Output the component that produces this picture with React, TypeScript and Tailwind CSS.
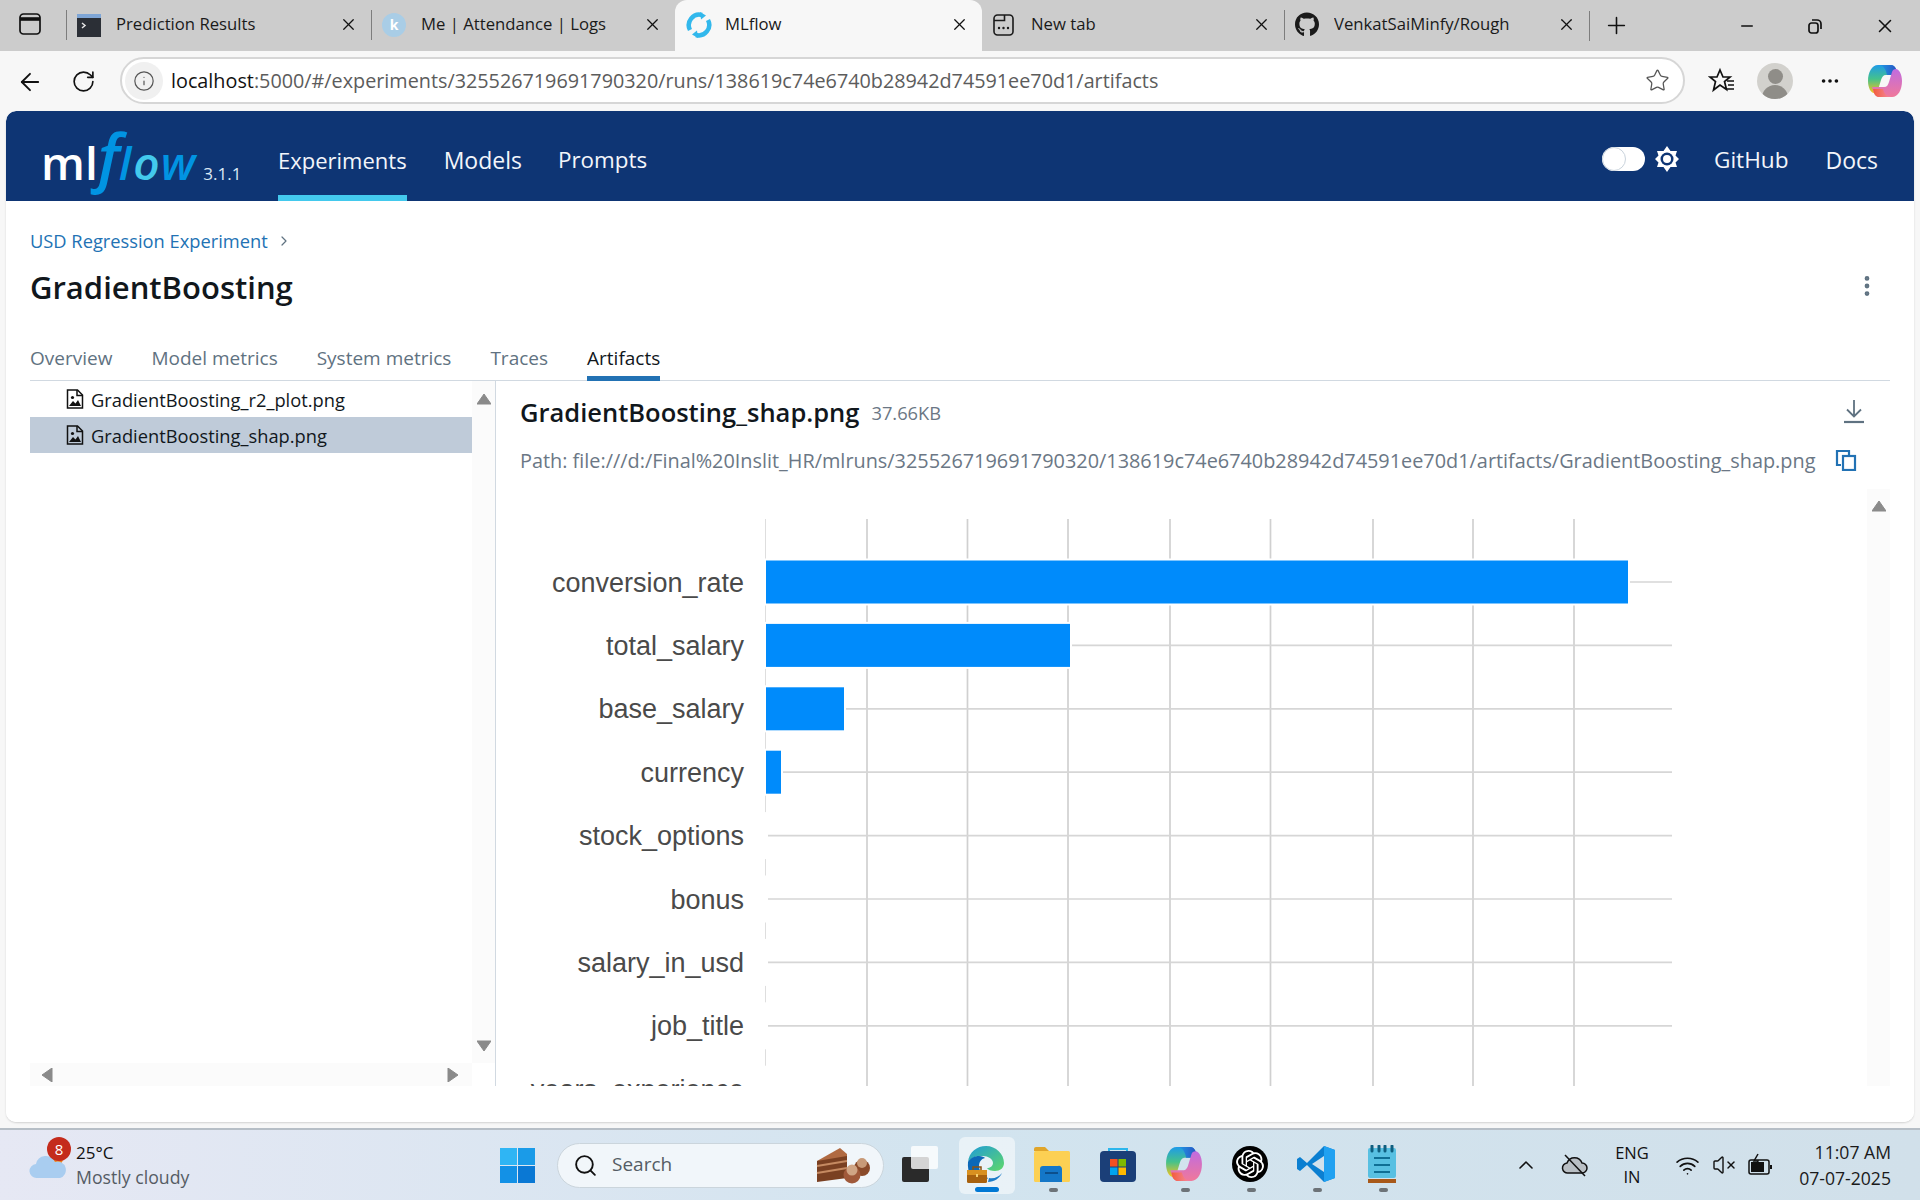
import React from 'react';
import { ArrowLeft, RotateCw, Info, Star, Plus, Minus, X, Search, ChevronUp, Wifi, VolumeX, MoreVertical, MoreHorizontal, ChevronRight } from 'lucide-react';
import { FaGithub } from 'react-icons/fa';
import { SiOpenai } from 'react-icons/si';

const UI_FONT = "font-['Open_Sans','Noto_Sans',sans-serif]";

const chartRows = [
    { label: 'conversion_rate', end: 1628 },
    { label: 'total_salary', end: 1070 },
    { label: 'base_salary', end: 844 },
    { label: 'currency', end: 781 },
    { label: 'stock_options', end: 766 },
    { label: 'bonus', end: 766 },
    { label: 'salary_in_usd', end: 766 },
    { label: 'job_title', end: 766 },
    { label: 'years_experience', end: 766 },
];

const gridX = [765.5, 867, 967.5, 1068, 1170, 1270.5, 1373, 1473, 1574];

const TerminalFavicon = () => (
    <svg width="24" height="24" viewBox="0 0 24 24">
        <rect x="0" y="1" width="24" height="23" fill="#2b2f36" />
        <rect x="0" y="1" width="24" height="4" fill="#7fa6d6" />
        <path d="M5 10l3 2.5L5 15" stroke="#e5e5e5" strokeWidth="1.5" fill="none" />
    </svg>
);

const KFavicon = () => (
    <div className="w-6 h-6 rounded-full bg-[#a9cde6] flex items-center justify-center text-white font-bold text-[14px]">k</div>
);

const MlflowFavicon = () => (
    <svg width="26" height="26" viewBox="0 0 26 26" fill="none" strokeWidth="4.5" strokeLinecap="butt">
        <path d="M4 18A10.5 10.5 0 0 1 16 3" stroke="#32b8ec" />
        <path d="M22 8A10.5 10.5 0 0 1 10 23" stroke="#32b8ec" />
        <path d="M14 0l6 3.5-5 4z" fill="#32b8ec" />
        <path d="M12 26l-6-3.5 5-4z" fill="#32b8ec" />
    </svg>
);

const NewTabFavicon = () => (
    <svg width="24" height="24" viewBox="0 0 24 24" fill="none" stroke="#1a1a1a" strokeWidth="1.6">
        <rect x="2" y="2" width="19" height="20" rx="3.5" />
        <path d="M2 7.5h10.5V2" />
        <path d="M7 15h.01M11.5 15h.01M16 15h.01" strokeWidth="2.4" strokeLinecap="round" />
    </svg>
);

const Tab: React.FC<{ width: string; icon: React.ReactNode; title: string; active?: boolean; divider?: boolean }> = ({ width, icon, title, active, divider }) => (
    <div className={`${width} h-[51px] pb-[2px] flex items-center relative ${active ? 'bg-[#f7f7f7] rounded-t-[12px]' : ''}`}>
        {divider && <div className="w-px h-[30px] bg-[#7d7d7d]" />}
        <div className={`${active ? 'ml-[11px] w-[26px] mr-[13px]' : 'ml-[10px] w-6 mr-[15px]'} flex items-center justify-center shrink-0`}>{icon}</div>
        <span className="flex-1 text-[16.7px] mb-[2px] text-[#1a1a1a] whitespace-nowrap overflow-hidden">{title}</span>
        <X size={19} strokeWidth={1.6} className="mr-[13px] text-[#111]" />
    </div>
);

const TabStrip = () => (
    <div className="h-[51px] bg-[#cccccc] flex items-center shrink-0">
        <div className="w-[66px] pr-[6px] pb-[4px] flex items-center justify-center">
            <svg width="22" height="24" viewBox="0 0 22 24" fill="none" stroke="#111" strokeWidth="1.7">
                <rect x="1" y="2" width="20" height="20" rx="3.5" />
                <path d="M1 7h20" strokeWidth="3.6" />
            </svg>
        </div>
        <Tab width="w-[305px]" divider icon={<TerminalFavicon />} title="Prediction Results" />
        <Tab width="w-[304px]" divider icon={<KFavicon />} title="Me | Attendance | Logs" />
        <Tab width="w-[307px]" active icon={<MlflowFavicon />} title="MLflow" />
        <Tab width="w-[302px]" icon={<NewTabFavicon />} title="New tab" />
        <Tab width="w-[305px]" divider icon={<FaGithub size={25} className="text-[#1a1a1a]" />} title="VenkatSaiMinfy/Rough" />
        <div className="w-px h-[30px] bg-[#7d7d7d]" />
        <Plus size={27} strokeWidth={1.4} className="ml-[13px] text-[#111]" />
        <div className="ml-auto flex items-center">
            <Minus size={18} strokeWidth={2} className="mr-[50px] text-[#111]" />
            <svg width="18" height="18" viewBox="0 0 18 18" fill="none" stroke="#111" strokeWidth="1.7" className="mr-[50px]">
                <rect x="3" y="6" width="9" height="10" rx="2.5" />
                <path d="M6 3h5a4 4 0 0 1 4 4v5" />
            </svg>
            <X size={22} strokeWidth={1.7} className="mr-[24px] text-[#111]" />
        </div>
    </div>
);

const CopilotIcon: React.FC<{ size: number; id: string }> = ({ size, id }) => (
    <svg width={size} height={size} viewBox="0 0 36 36">
        <defs>
            <linearGradient id={`${id}A`} x1="0" y1="0" x2="0" y2="1">
                <stop offset="0" stopColor="#1f9be8" />
                <stop offset="0.5" stopColor="#45c28b" />
                <stop offset="1" stopColor="#f6c21c" />
            </linearGradient>
            <linearGradient id={`${id}B`} x1="0" y1="0" x2="0" y2="1">
                <stop offset="0" stopColor="#c06ce0" />
                <stop offset="1" stopColor="#f0789a" />
            </linearGradient>
            <linearGradient id={`${id}C`} x1="0" y1="0" x2="1" y2="0">
                <stop offset="0" stopColor="#1fa0e8" />
                <stop offset="1" stopColor="#2a4fc0" />
            </linearGradient>
            <linearGradient id={`${id}D`} x1="0" y1="0" x2="1" y2="0">
                <stop offset="0" stopColor="#f25c3b" />
                <stop offset="1" stopColor="#f58ca8" />
            </linearGradient>
        </defs>
        <path d="M11 2h13c2 0 4 1.500 5 4l2 6H19c-3 0-4 2-5 5l-3 10c-.6 2-2 3-4 3-3 0-6-5-6-12C1 9 5 2 11 2z" fill={`url(#${id}A)`} />
        <path d="M11 2h13c2 0 4 1.500 5 4l2 6H20c-1-5-3-10-9-10z" fill={`url(#${id}C)`} />
        <path d="M25 34H12c-2 0-4-1.500-5-4l-2-6h12c3 0 4-2 5-5l3-10c.6-2 2-3 4-3 3 0 6 5 6 12 0 9-4 16-10 16z" fill={`url(#${id}B)`} />
        <path d="M25 34H12c-2 0-4-1.500-5-4l-1-4h10c1 4 3 8 9 8z" fill={`url(#${id}D)`} />
    </svg>
);

const Toolbar = () => (
    <div className="h-[60px] bg-[#f7f7f7] flex items-center shrink-0">
        <ArrowLeft size={28} strokeWidth={1.6} className="ml-[16px] mt-[1px] text-[#111]" />
        <RotateCw size={25} strokeWidth={1.6} className="ml-[27px] mt-[1px] text-[#111]" />
        <div className="ml-[24px] w-[1565px] h-[47px] mt-[-1px] bg-white rounded-full border-2 border-[#d6d6d6] flex items-center">
            <div className="ml-[3px] w-[38px] h-[38px] rounded-full bg-[#f0f0f0] flex items-center justify-center">
                <Info size={22} strokeWidth={1.3} className="text-[#555]" />
            </div>
            <span className="ml-[8px] mt-[1px] text-[19.8px] text-[#5c5c5c] whitespace-nowrap">
                <span className="text-[#111]">localhost</span>:5000/#/experiments/325526719691790320/runs/138619c74e6740b28942d74591ee70d1/artifacts
            </span>
            <Star size={25} strokeWidth={1.2} className="ml-auto mr-[13px] text-[#555]" />
        </div>
        <svg width="28" height="28" viewBox="0 0 28 28" fill="none" stroke="#111" strokeWidth="1.7" className="ml-[23px]">
            <path d="M12 3l3 7h7l-5.500 4.500 2 8L12 18l-6.500 5 2-8.500L2 10h7z" />
            <path d="M19 14h7M20 18h6M19 22h7" />
        </svg>
        <div className="ml-[21px] w-[36px] h-[36px] rounded-full bg-[#d2d1cd] overflow-hidden flex flex-col items-center">
            <div className="w-[15px] h-[17px] mt-[6px] rounded-full bg-[#8f8d88]" />
            <div className="w-[26px] h-[16px] mt-[1px] rounded-t-full bg-[#8f8d88]" />
        </div>
        <MoreHorizontal size={22} strokeWidth={2} className="ml-[26px] text-[#111]" />
        <div className="ml-[26px]"><CopilotIcon size={36} id="cpTop" /></div>
    </div>
);

const ThemeIcon = () => (
    <svg width="24" height="26" viewBox="0 0 24 26">
        <path d="M12 0l3.500 5H22l-1.500 4.500L24 13l-3.500 3.500L22 21h-6.500L12 26l-3.500-5H2l1.500-4.500L0 13l3.500-3.500L2 5h6.500z" fill="#fff" />
        <circle cx="12" cy="13" r="6.500" fill="#0e3574" />
        <circle cx="12" cy="13" r="4" fill="#fff" />
    </svg>
);

const MlflowLogo = () => (
    <div className="w-[272px] shrink-0 pl-[35px] flex items-baseline text-[46px] leading-none font-semibold">
        <span className="text-white">ml</span>
        <span className="text-[#0194e2] italic text-[64px] mr-[-1px]">f</span>
        <span className="text-[#0194e2] italic">l</span>
        <span className="text-[#43c9ed] italic ml-[2px]">o</span>
        <span className="text-[#0194e2] italic ml-[1px]">w</span>
        <span className="text-[#dbe9f5] text-[17px] font-normal ml-[8px]">3.1.1</span>
    </div>
);

const NavLink: React.FC<{ label: string; active?: boolean; className?: string }> = ({ label, active, className }) => (
    <div className={`h-full flex items-center relative pt-[8px] text-[#f3f6fb] ${className ?? ''}`}>
        <span>{label}</span>
        {active && <div className="absolute left-0 right-0 bottom-0 h-[6px] bg-[#43c9ed]" />}
    </div>
);

const Header = () => (
    <div className="h-[90px] bg-[#0e3574] rounded-t-[10px] flex items-center shrink-0">
        <MlflowLogo />
        <NavLink label="Experiments" active className="text-[22px]" />
        <NavLink label="Models" className="ml-[37px] text-[23px]" />
        <NavLink label="Prompts" className="ml-[36px] text-[22.4px]" />
        <div className="ml-auto flex items-center h-full">
            <div className="w-[43px] h-[24px] mt-[6px] bg-white rounded-full relative mr-[10px]">
                <div className="w-[24px] h-[24px] rounded-full border border-[#c9d3dc] bg-white" />
            </div>
            <div className="mt-[6px]"><ThemeIcon /></div>
            <NavLink label="GitHub" className="ml-[35px] text-[22.6px]" />
            <NavLink label="Docs" className="ml-[37px] mr-[36px] text-[23px]" />
        </div>
    </div>
);

const FileImageIcon = () => (
    <svg width="18" height="20" viewBox="0 0 18 20" fill="none" stroke="#111" strokeWidth="1.5">
        <path d="M1.500 1h10l5 5v13h-15z" />
        <path d="M11 1v5.500h5.500" />
        <circle cx="6.500" cy="8.500" r="1.600" fill="#111" stroke="none" />
        <path d="M3 17l4-5 2.500 2.500L12 11l3 6z" fill="#111" stroke="none" />
    </svg>
);

const ArrowBtn: React.FC<{ dir: 'up' | 'down' | 'left' | 'right' }> = ({ dir }) => {
    const d = {
        up: 'M7 1L14 11H0z',
        down: 'M7 11L0 1h14z',
        left: 'M1 7L11 0v14z',
        right: 'M11 7L1 0v14z',
    }[dir];
    return (
        <svg width="14" height="14" viewBox="0 0 14 14" className="shrink-0">
            <path d={d} fill="#8a8a8a" stroke="#8a8a8a" strokeLinejoin="round" />
        </svg>
    );
};

const TreeRow: React.FC<{ name: string; selected?: boolean }> = ({ name, selected }) => (
    <div className={`h-[36px] flex items-center pl-[36px] ${selected ? 'bg-[#bfcbd9]' : ''}`}>
        <FileImageIcon />
        <span className="ml-[7px] mt-[1px] text-[18.3px] text-[#11171c]">{name}</span>
    </div>
);

const FileTree = () => (
    <div className="w-[466px] ml-[24px] shrink-0 border-r border-[#d1d9e1] flex flex-col">
        <div className="flex-1 flex min-h-0">
            <div className="flex-1">
                <TreeRow name="GradientBoosting_r2_plot.png" />
                <TreeRow name="GradientBoosting_shap.png" selected />
            </div>
            <div className="w-[23px] bg-[#fbfbfb] flex flex-col items-center justify-between pt-[12px] pb-[9px]">
                <ArrowBtn dir="up" />
                <ArrowBtn dir="down" />
            </div>
        </div>
        <div className="h-[23px] w-[442px] bg-[#fbfbfb] flex items-center justify-between px-[11px]">
            <ArrowBtn dir="left" />
            <ArrowBtn dir="right" />
        </div>
    </div>
);

const ShapChart = () => (
    <svg viewBox="496 489 1371 597" width="1371" height="597" className="block">
        {gridX.map((x, i) => (
            <line key={x} x1={x} x2={x} y1={519} y2={1086} stroke={i === 0 ? '#dedede' : '#d0d0d0'} strokeWidth={i === 0 ? 1 : 1.7} />
        ))}
        {chartRows.map((row, i) => {
            const y = 582 + 63.4 * i;
            return (
                <g key={row.label}>
                    <line x1={766} x2={1672} y1={y} y2={y} stroke="#d6d6d6" strokeWidth={1.7} />
                    <rect x={764} y={y - 23.5} width={row.end - 764 + 2} height={47} fill="#fff" />
                    {row.end > 766 && <rect x={766} y={y - 21.5} width={row.end - 766} height={43} fill="#008bfb" />}
                    <text x={744} y={y + 9.500} textAnchor="end" fontSize={27} fill="#4a4a4a" fontFamily="'Liberation Sans', Arial, sans-serif">
                        {row.label}
                    </text>
                </g>
            );
        })}
    </svg>
);

const ArtifactView = () => (
    <div className="flex-1 min-w-0 flex flex-col">
        <div className="h-[59px] pl-[24px] flex items-center">
            <span className="text-[25.5px] font-semibold text-[#11171c] mt-[4px]">GradientBoosting_shap.png</span>
            <span className="ml-[12px] text-[18.3px] text-[#6b7785] mt-[4px]">37.66KB</span>
            <svg width="24" height="26" viewBox="0 0 24 26" fill="none" stroke="#5f7281" strokeWidth="1.8" className="ml-auto mr-[24px]">
                <path d="M12 2v16M5 11.500l7 7 7-7" />
                <path d="M2 24h20" strokeWidth="2.2" />
            </svg>
        </div>
        <div className="h-[49px] pb-[7px] pl-[24px] flex items-center">
            <span className="text-[19.88px] text-[#6b7785] whitespace-nowrap">
                Path: file:///d:/Final%20Inslit_HR/mlruns/325526719691790320/138619c74e6740b28942d74591ee70d1/artifacts/GradientBoosting_shap.png
            </span>
            <svg width="22" height="22" viewBox="0 0 22 22" fill="none" stroke="#2272b4" strokeWidth="2.2" className="ml-[20px] mb-[2px]">
                <path d="M6 16H2V2h12v4" />
                <rect x="8" y="7" width="12" height="14" />
            </svg>
        </div>
        <div className="flex-1 min-h-0 flex">
            <div className="flex-1 min-w-0 overflow-hidden">
                <ShapChart />
            </div>
            <div className="w-[23px] bg-[#fbfbfb] flex justify-center pt-[11px]">
                <ArrowBtn dir="up" />
            </div>
        </div>
    </div>
);

const RunPage = () => (
    <div className="flex-1 min-h-0 flex flex-col bg-white">
        <div className="h-[180px] shrink-0 pl-[24px] pr-[24px] relative">
            <div className="h-[66px] pt-[13px] flex items-center text-[18.3px] text-[#2272b4]">
                USD Regression Experiment
                <ChevronRight size={16} strokeWidth={1.8} className="ml-[8px] text-[#5f7281]" />
            </div>
            <div className="flex items-center justify-between h-[44px]">
                <h1 className="text-[31px] font-semibold text-[#11171c] mb-[4px]">GradientBoosting</h1>
                <MoreVertical size={26} strokeWidth={2.4} className="text-[#5f7281] mt-[-7px] mr-[10px]" />
            </div>
            <div className="mt-[21px] h-[49px] flex items-end gap-[39px] border-b border-[#d1d9e1] text-[19px] text-[#5f7281]">
                {['Overview', 'Model metrics', 'System metrics', 'Traces'].map((t) => (
                    <div key={t} className="h-[49px] pt-[5px] flex items-center">{t}</div>
                ))}
                <div className="h-[49px] flex items-center border-b-[5px] border-[#2272b4] mb-[-1px] pt-[8px] text-[#11171c] font-medium">Artifacts</div>
            </div>
        </div>
        <div className="flex-1 min-h-0 flex pr-[24px]">
            <FileTree />
            <ArtifactView />
        </div>
        <div className="h-[36px] shrink-0" />
    </div>
);

const EdgeIcon = () => (
    <svg width="38" height="38" viewBox="0 0 38 38">
        <defs>
            <linearGradient id="edgeG" x1="0" y1="0" x2="1" y2="1">
                <stop offset="0" stopColor="#1e9bd8" />
                <stop offset="1" stopColor="#5fd86a" />
            </linearGradient>
        </defs>
        <path d="M1 17C2 7 10 1 19 1c10 0 18 8 18 17 0 5-4 8-9 8-4 0-7-1-8-3 3 0 6-2 6-5 0-4-5-7-10-7C9 11 3 13 1 17z" fill="url(#edgeG)" />
        <path d="M1 17c2-4 7-6 11-6 3 0 5 1 6 2-4 1-6 4-6 8 0 5 4 10 9 12-1 2-8 4-10 4C5 37 0 27 1 17z" fill="#0c68b8" />
        <path d="M22 33c5 1 10-1 13-5-2 5-8 9-14 9z" fill="#1c7cc8" />
        <rect x="0" y="25" width="20" height="13" rx="1.500" fill="#a8620f" />
        <rect x="0" y="25" width="20" height="5" fill="#d89020" />
        <path d="M6 25v-3h8v3" fill="none" stroke="#8a5210" strokeWidth="1.500" />
        <rect x="9" y="29" width="2" height="3" fill="#f6d070" />
    </svg>
);

const FolderIcon = () => (
    <svg width="36" height="36" viewBox="0 0 36 36">
        <path d="M0 3a2 2 0 0 1 2-2h9l4 4h-15z" fill="#e0a52a" />
        <rect x="0" y="5" width="36" height="31" rx="1.500" fill="#fcd053" />
        <path d="M6 23a3 3 0 0 1 3-3h15a3 3 0 0 1 4 3v13H6z" fill="#1477c8" />
        <rect x="11" y="26" width="13" height="2" fill="#0c4f8c" />
    </svg>
);

const StoreIcon = () => (
    <svg width="36" height="36" viewBox="0 0 36 36">
        <path d="M9 8V3h18v5" fill="none" stroke="#2cb6ec" strokeWidth="2" />
        <rect x="0" y="5" width="36" height="31" rx="4" fill="#1b3f78" />
        <rect x="10" y="13" width="7.500" height="7.500" fill="#f25022" />
        <rect x="18.500" y="13" width="7.500" height="7.500" fill="#7fba00" />
        <rect x="10" y="21.500" width="7.500" height="7.500" fill="#00a4ef" />
        <rect x="18.500" y="21.500" width="7.500" height="7.500" fill="#ffb900" />
    </svg>
);

const VsCodeIcon = () => (
    <svg width="38" height="38" viewBox="0 0 38 38">
        <path d="M27 1L10 18 3 12 0 14v10l3 2 7-6 17 17 11-4V5z" fill="#0b7fd1" />
        <path d="M27 11L15 19l12 8z" fill="#d2e1ec" />
        <path d="M27 1l11 4v28l-11 4z" fill="#21a1f1" />
    </svg>
);

const NotepadIcon = () => (
    <svg width="28" height="38" viewBox="0 0 28 38">
        <rect x="0" y="3" width="28" height="30" rx="2" fill="#58c0e2" />
        <rect x="0" y="34" width="28" height="4" fill="#a8591a" />
        <path d="M4 1v5M11 1v5M17 1v5M24 1v5" stroke="#0f5f80" strokeWidth="3" strokeLinecap="round" />
        <path d="M6 13h16M6 20h16M6 27h16" stroke="#0f6f95" strokeWidth="2" />
    </svg>
);

const TaskViewIcon = () => (
    <div className="w-9 h-9 relative">
        <div className="absolute left-0 bottom-0 w-[27px] h-[25px] rounded-[2px] bg-[#2a2a2a]" />
        <div className="absolute right-0 top-0 w-[27px] h-[23px] rounded-[2px] bg-white/80" />
    </div>
);

const CakeIcon = () => (
    <svg width="56" height="38" viewBox="0 0 56 38">
        <path d="M1 15L24 2l7 6v4L1 28z" fill="#b06a42" />
        <path d="M1 15l30-5v22L1 36z" fill="#7a4022" />
        <path d="M1 20l30-5M1 27l30-5" stroke="#c58a62" strokeWidth="2" />
        <circle cx="46" cy="22" r="8" fill="#8a4a2a" />
        <circle cx="46" cy="17" r="5" fill="#c89a78" />
        <circle cx="36" cy="29" r="8.500" fill="#a0593a" />
        <circle cx="36" cy="24" r="5.500" fill="#d0a585" />
    </svg>
);

const WeatherIcon = () => (
    <svg width="38" height="26" viewBox="0 0 38 26">
        <circle cx="28" cy="6" r="6" fill="#f0851f" />
        <path d="M8 25a7 7 0 0 1-1-14 10 10 0 0 1 19-2 8 8 0 0 1 5 16z" fill="#a9cdf0" />
    </svg>
);

const AppSlot: React.FC<{ children: React.ReactNode; dot?: boolean; active?: boolean }> = ({ children, dot, active }) => (
    <div className="w-[66px] h-full flex items-center justify-center relative">
        {active && <div className="absolute left-[6px] right-[4px] top-[7px] bottom-[6px] rounded-[6px] bg-white/50" />}
        <div className="relative mb-[3px]">{children}</div>
        {dot && <div className="absolute bottom-[8px] left-[30px] w-[9px] h-[4px] rounded-full bg-[#6d7378]" />}
        {active && <div className="absolute bottom-[8px] left-[22px] w-[24px] h-[5px] rounded-full bg-[#0078d4]" />}
    </div>
);

const TaskBar = () => (
    <div className="h-[72px] shrink-0 border-t-2 border-[#b6bec6] bg-linear-to-r from-[#e6e8f4] via-[#d2e4ef] to-[#d1e0ea] flex items-center">
        <div className="w-[500px] pl-[29px] flex items-center shrink-0 relative">
            <div className="mt-[2px]"><WeatherIcon /></div>
            <div className="absolute left-[47px] top-[-3px] w-[24px] h-[24px] rounded-full bg-[#c42b1c] text-white text-[15px] flex items-center justify-center">8</div>
            <div className="ml-[9px] flex flex-col text-[17px] leading-[25px]">
                <span className="text-[#111]">25°C</span>
                <span className="text-[#555c64] text-[17.7px]">Mostly cloudy</span>
            </div>
        </div>
        <div className="w-[57px] shrink-0">
            <svg width="35" height="35" viewBox="0 0 35 35">
                <rect x="0" y="0" width="17" height="17" fill="#2fb5f4" />
                <rect x="18" y="0" width="17" height="17" fill="#1a9be8" />
                <rect x="0" y="18" width="17" height="17" fill="#1391e6" />
                <rect x="18" y="18" width="17" height="17" fill="#0a78d4" />
            </svg>
        </div>
        <div className="w-[327px] h-[45px] shrink-0 rounded-full bg-[#f1f6fa] border border-[#cbd5dc] flex items-center">
            <Search size={25} strokeWidth={1.8} className="ml-[15px] text-[#111]" />
            <span className="ml-[14px] mb-[1px] text-[19px] text-[#555c64]">Search</span>
            <div className="ml-auto mr-[11px]"><CakeIcon /></div>
        </div>
        <div className="w-[3px] shrink-0" />
        <div className="flex items-center h-full shrink-0">
            <AppSlot><TaskViewIcon /></AppSlot>
            <AppSlot active><EdgeIcon /></AppSlot>
            <AppSlot dot><FolderIcon /></AppSlot>
            <AppSlot><StoreIcon /></AppSlot>
            <AppSlot dot><CopilotIcon size={38} id="cpBar" /></AppSlot>
            <AppSlot dot>
                <div className="w-9 h-9 rounded-full bg-black flex items-center justify-center">
                    <SiOpenai size={28} className="text-white" />
                </div>
            </AppSlot>
            <AppSlot dot><VsCodeIcon /></AppSlot>
            <AppSlot dot><NotepadIcon /></AppSlot>
        </div>
        <div className="flex-1 flex items-center justify-end pr-[29px] text-[#111] text-[16.5px]">
            <ChevronUp size={24} strokeWidth={1.6} />
            <svg width="28" height="26" viewBox="0 0 28 26" fill="none" stroke="#111" strokeWidth="1.5" className="ml-[23px]">
                <path d="M7 21a5 5 0 0 1-1-10 8 8 0 0 1 15 0 5 5 0 0 1 0 10z" fill="#b9bfc4" />
                <path d="M4 3l20 21" />
            </svg>
            <div className="w-[76px] ml-[5px] flex flex-col items-center leading-[24px]">
                <span>ENG</span>
                <span>IN</span>
            </div>
            <Wifi size={25} strokeWidth={1.6} className="ml-[5px]" />
            <VolumeX size={24} strokeWidth={1.4} className="ml-[12px]" />
            <svg width="26" height="24" viewBox="0 0 26 24" fill="none" stroke="#111" strokeWidth="1.5" className="ml-[11px]">
                <rect x="2" y="7" width="20" height="14" rx="2" />
                <rect x="4" y="9" width="13" height="10" fill="#111" stroke="none" />
                <path d="M24 12v4" strokeWidth="2" />
                <path d="M11 1L7 8h4l-2 6" strokeWidth="1.500" />
            </svg>
            <div className="w-[118px] mb-[1px] flex flex-col items-end leading-[26px] text-[17.6px] text-[#1a1a1a]">
                <span>11:07 AM</span>
                <span>07-07-2025</span>
            </div>
        </div>
    </div>
);

export default function App() {
    return (
        <div className={`w-[1920px] h-[1200px] flex flex-col overflow-hidden bg-[#f7f7f7] ${UI_FONT}`}>
            <TabStrip />
            <Toolbar />
            <div className="flex-1 min-h-0 px-[6px] pb-[6px] flex">
                <div className="flex-1 min-w-0 flex flex-col bg-white rounded-[10px] shadow-[0_1px_2px_rgba(0,0,0,0.15)] overflow-hidden">
                    <Header />
                    <RunPage />
                </div>
            </div>
            <TaskBar />
        </div>
    );
}
